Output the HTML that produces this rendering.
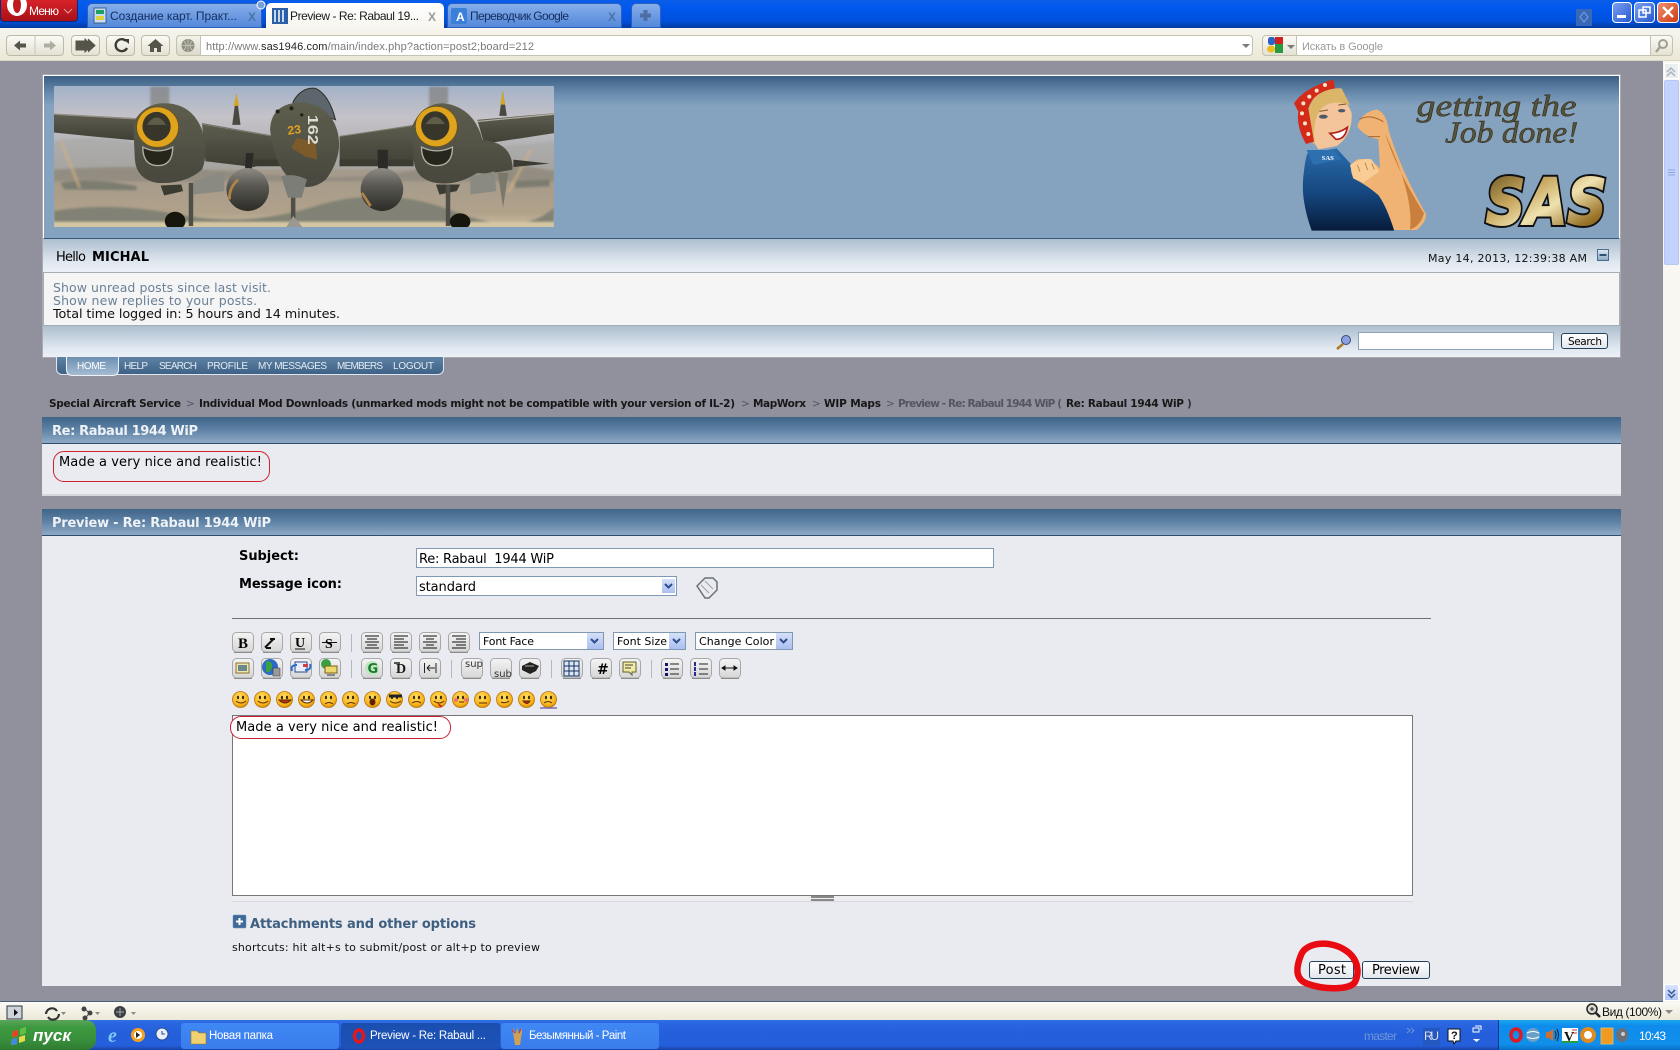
<!DOCTYPE html>
<html><head><meta charset="utf-8"><title>Preview - Re: Rabaul 1944 WiP</title>
<style>
html,body{margin:0;padding:0;width:1680px;height:1050px;overflow:hidden;background:#91919e}
.b{position:absolute;box-sizing:border-box}
svg{position:absolute;left:0;top:0}
text{white-space:pre}
.d{font-family:"DejaVu Sans",sans-serif}
.l{font-family:"Liberation Sans",sans-serif}
</style></head><body>
<!-- window chrome -->
<div class="b" style="left:0;top:0;width:1680px;height:28px;background:linear-gradient(#0a5de8,#0058ee 30%,#0050dc 75%,#003a9e)"></div>
<div class="b" style="left:0;top:28px;width:1680px;height:33px;background:linear-gradient(#f6f5ee,#ece9d8);border-bottom:1px solid #d8d5c4"></div>
<div class="b" style="left:0;top:0;width:78px;height:22px;background:linear-gradient(#d8222a,#a80f18);border:1px solid #0a2a7c;border-top:0;border-radius:0 0 4px 4px"></div>
<div class="b" style="left:87px;top:3px;width:175px;height:25px;background:linear-gradient(#86aeea,#5488da);border-radius:5px 5px 0 0;border:1px solid #2a5fc0"></div>
<div class="b" style="left:266px;top:3px;width:178px;height:26px;background:linear-gradient(#fff,#f6f5ee);border-radius:5px 5px 0 0"></div>
<div class="b" style="left:447px;top:3px;width:175px;height:25px;background:linear-gradient(#86aeea,#5488da);border-radius:5px 5px 0 0;border:1px solid #2a5fc0"></div>
<div class="b" style="left:631px;top:3px;width:30px;height:25px;background:linear-gradient(#86aeea,#5488da);border-radius:5px 5px 0 0;border:1px solid #2a5fc0"></div>
<div class="b" style="left:1576px;top:9px;width:16px;height:17px;background:#3a68b8"></div>
<div class="b" style="left:1612px;top:2px;width:20px;height:21px;background:linear-gradient(135deg,#7aa0f0,#2858d0);border:1px solid #fff;border-radius:4px"></div>
<div class="b" style="left:1634px;top:2px;width:21px;height:21px;background:linear-gradient(135deg,#7aa0f0,#2858d0);border:1px solid #fff;border-radius:4px"></div>
<div class="b" style="left:1657px;top:2px;width:22px;height:21px;background:linear-gradient(135deg,#ee9070,#d03a10);border:1px solid #fff;border-radius:4px"></div>
<!-- nav buttons -->
<div class="b" style="left:6px;top:35px;width:58px;height:21px;background:linear-gradient(#fbfaf5,#e4e2d4);border:1px solid #bdbaa8;border-radius:4px"></div>
<div class="b" style="left:71px;top:35px;width:29px;height:21px;background:linear-gradient(#fbfaf5,#e4e2d4);border:1px solid #bdbaa8;border-radius:4px"></div>
<div class="b" style="left:106px;top:35px;width:29px;height:21px;background:linear-gradient(#fbfaf5,#e4e2d4);border:1px solid #bdbaa8;border-radius:4px"></div>
<div class="b" style="left:141px;top:35px;width:29px;height:21px;background:linear-gradient(#fbfaf5,#e4e2d4);border:1px solid #bdbaa8;border-radius:4px"></div>
<div class="b" style="left:176px;top:35px;width:1077px;height:21px;background:#fff;border:1px solid #c4c1ae;border-radius:4px"></div>
<div class="b" style="left:176px;top:35px;width:25px;height:21px;background:linear-gradient(#f4f3ea,#dcdacb);border:1px solid #c4c1ae;border-radius:4px 0 0 4px"></div>
<div class="b" style="left:1262px;top:35px;width:411px;height:21px;background:#fff;border:1px solid #c4c1ae;border-radius:4px"></div>
<div class="b" style="left:1262px;top:35px;width:35px;height:21px;background:linear-gradient(#fbfaf5,#e4e2d4);border:1px solid #c4c1ae;border-radius:4px 0 0 4px"></div>
<div class="b" style="left:1650px;top:35px;width:23px;height:21px;background:linear-gradient(#fbfaf5,#e4e2d4);border:1px solid #c4c1ae;border-radius:0 4px 4px 0"></div>
<!-- scrollbar -->
<div class="b" style="left:1663px;top:61px;width:17px;height:941px;background:#f8f7f2"></div>
<div class="b" style="left:1664px;top:63px;width:15px;height:16px;background:#ecefef;border:1px solid #fff"></div>
<div class="b" style="left:1664px;top:80px;width:15px;height:185px;background:#c3d3fd;border:1px solid #b6c8f2;border-radius:2px"></div>
<div class="b" style="left:1664px;top:984px;width:15px;height:17px;background:linear-gradient(#d8e3fd,#b4c8f6);border:1px solid #fff"></div>
<!-- forum header -->
<div class="b" style="left:42px;top:74px;width:1579px;height:284px;background:#a9a9b0"></div>
<div class="b" style="left:43px;top:75px;width:1577px;height:164px;background:linear-gradient(#3b5f85 0,#6a8cae 18px,#85a3bf 30px,#85a3bf 100%);border:1px solid #fff;border-bottom:1px solid #35597c"></div>
<div class="b" style="left:43px;top:239px;width:1577px;height:33px;background:linear-gradient(#aebfcf,#dfe7ef 70%,#ecf1f6)"></div>
<div class="b" style="left:43px;top:272px;width:1577px;height:54px;background:#f5f5f5;border:1px solid #a6adb3"></div>
<div class="b" style="left:43px;top:326px;width:1577px;height:31px;background:linear-gradient(#aebfcf,#dfe7ef 70%,#ecf1f6)"></div>
<div class="b" style="left:1358px;top:332px;width:196px;height:18px;background:#fff;border:1px solid #8ca3b8"></div>
<div class="b" style="left:1561px;top:333px;width:47px;height:16px;background:linear-gradient(#fff,#e2e7ec);border:1px solid #23405c;border-radius:3px"></div>
<div class="b" style="left:1597px;top:249px;width:12px;height:12px;background:linear-gradient(#dfe8f2,#8ea8c4);border:1px solid #4a6c90"></div>
<!-- menu -->
<div class="b" style="left:56px;top:357px;width:388px;height:18px;background:linear-gradient(#5f82a4,#3e6287);border:1px solid #dfe7ef;border-top:0;border-radius:0 0 6px 6px"></div>
<div class="b" style="left:66px;top:357px;width:53px;height:19px;background:linear-gradient(#6d90b2,#a4bcd2);border:1px solid #eef2f6;border-top:0;border-radius:0 0 6px 6px"></div>
<!-- post preview -->
<div class="b" style="left:42px;top:417px;width:1579px;height:27px;background:linear-gradient(#3f6487,#5f83a6 50%,#8faac5);border-bottom:1px solid #2e4e6c"></div>
<div class="b" style="left:42px;top:444px;width:1579px;height:52px;background:#e9ebf1;border-bottom:2px solid #d6d6dc"></div>
<div class="b" style="left:53px;top:451px;width:217px;height:31px;border:1px solid #d02030;border-radius:11px"></div>
<!-- form -->
<div class="b" style="left:42px;top:509px;width:1579px;height:27px;background:linear-gradient(#3f6487,#5f83a6 50%,#8faac5);border-bottom:1px solid #2e4e6c"></div>
<div class="b" style="left:42px;top:536px;width:1579px;height:450px;background:#e9ebf1"></div>
<div class="b" style="left:416px;top:548px;width:578px;height:20px;background:#fff;border:1px solid #7f99b2"></div>
<div class="b" style="left:416px;top:576px;width:261px;height:20px;background:#fff;border:1px solid #7f99b2"></div>
<div class="b" style="left:661px;top:578px;width:15px;height:16px;background:linear-gradient(#d5e0f8,#aabff0);border:1px solid #fff"></div>
<div class="b" style="left:232px;top:618px;width:1199px;height:1px;background:#6c7178"></div>
<div class="b" style="left:479px;top:632px;width:125px;height:18px;background:#fff;border:1px solid #7f99b2"></div>
<div class="b" style="left:587px;top:633px;width:16px;height:16px;background:linear-gradient(#d5e0f8,#aabff0)"></div>
<div class="b" style="left:613px;top:632px;width:73px;height:18px;background:#fff;border:1px solid #7f99b2"></div>
<div class="b" style="left:669px;top:633px;width:16px;height:16px;background:linear-gradient(#d5e0f8,#aabff0)"></div>
<div class="b" style="left:695px;top:632px;width:98px;height:18px;background:#fff;border:1px solid #7f99b2"></div>
<div class="b" style="left:776px;top:633px;width:16px;height:16px;background:linear-gradient(#d5e0f8,#aabff0)"></div>
<div class="b" style="left:232px;top:715px;width:1181px;height:181px;background:#fff;border:1px solid #777"></div>
<div class="b" style="left:230px;top:716px;width:221px;height:23px;background:#fff;border:1px solid #c8202e;border-radius:11px"></div>
<div class="b" style="left:232px;top:896px;width:1181px;height:6px;background:#eeeef0;border-bottom:1px solid #d8d8de"></div>
<div class="b" style="left:811px;top:896px;width:23px;height:2px;background:#888"></div>
<div class="b" style="left:811px;top:899px;width:23px;height:2px;background:#888"></div>
<div class="b" style="left:1309px;top:961px;width:45px;height:18px;background:linear-gradient(#fff,#e2e7ec);border:1px solid #23405c;border-radius:3px"></div>
<div class="b" style="left:1362px;top:961px;width:68px;height:18px;background:linear-gradient(#fff,#e2e7ec);border:1px solid #23405c;border-radius:3px"></div>
<!-- status + taskbar -->
<div class="b" style="left:0;top:1001px;width:1663px;height:1px;background:#4a6078"></div>
<div class="b" style="left:0;top:1002px;width:1680px;height:18px;background:linear-gradient(#fbfaf4,#ece9d8)"></div>
<div class="b" style="left:0;top:1020px;width:1680px;height:30px;background:linear-gradient(#2f6fe6,#2a66e0 12%,#245edb 50%,#2560dc 85%,#1941a5)"></div>
<div class="b" style="left:0;top:1020px;width:96px;height:30px;background:linear-gradient(#5aa55a,#3c9a3e 25%,#388e3c 70%,#2f7a30);border-radius:0 10px 10px 0"></div>
<div class="b" style="left:181px;top:1023px;width:158px;height:26px;background:linear-gradient(#3f88f4,#3a7cec);border-radius:3px"></div>
<div class="b" style="left:341px;top:1023px;width:159px;height:26px;background:linear-gradient(#1a4fb0,#1e52b7);border-radius:3px"></div>
<div class="b" style="left:501px;top:1023px;width:158px;height:26px;background:linear-gradient(#3f88f4,#3a7cec);border-radius:3px"></div>
<div class="b" style="left:1498px;top:1020px;width:182px;height:30px;background:linear-gradient(#18a8ee,#0f8bec 20%,#1090ea 80%,#0a70c8);border-left:1px solid #0a3a90"></div>

<svg width="1680" height="1050" viewBox="0 0 1680 1050" xmlns="http://www.w3.org/2000/svg">
<defs>
<linearGradient id="sky" x1="0" y1="0" x2="0" y2="1"><stop offset="0" stop-color="#a3b2c8"/><stop offset=".22" stop-color="#c5c2c8"/><stop offset=".45" stop-color="#b1b1b2"/><stop offset=".6" stop-color="#a49a8c"/><stop offset=".9" stop-color="#b0a18a"/><stop offset="1" stop-color="#cdbf9f"/></linearGradient>
<linearGradient id="tank" x1="0" y1="0" x2="0" y2="1"><stop offset="0" stop-color="#8e8c84"/><stop offset=".4" stop-color="#5a5953"/><stop offset="1" stop-color="#2c2b27"/></linearGradient>
<linearGradient id="body" x1="0" y1="0" x2="0" y2="1"><stop offset="0" stop-color="#5e5e4e"/><stop offset="1" stop-color="#48473e"/></linearGradient>
<linearGradient id="wing" x1="0" y1="0" x2="0" y2="1"><stop offset="0" stop-color="#5d5d50"/><stop offset="1" stop-color="#3f3f35"/></linearGradient>
<linearGradient id="gold" x1="0" y1="0" x2="1" y2="1"><stop offset="0" stop-color="#5a4516"/><stop offset=".35" stop-color="#c8a860"/><stop offset=".55" stop-color="#efe2b0"/><stop offset=".8" stop-color="#9a7428"/><stop offset="1" stop-color="#5a4516"/></linearGradient>
<linearGradient id="dress" x1="0" y1="0" x2="0" y2="1"><stop offset="0" stop-color="#2a6cac"/><stop offset=".55" stop-color="#15467e"/><stop offset="1" stop-color="#071c3a"/></linearGradient>
<radialGradient id="sm" cx=".45" cy=".35" r=".7"><stop offset="0" stop-color="#ffe06a"/><stop offset=".7" stop-color="#f8b418"/><stop offset="1" stop-color="#c77c08"/></radialGradient>
<linearGradient id="btn" x1="0" y1="0" x2="0" y2="1"><stop offset="0" stop-color="#f4f4f4"/><stop offset="1" stop-color="#d6d6d6"/></linearGradient>
<filter id="soft"><feGaussianBlur stdDeviation="3"/></filter>
<filter id="s2"><feGaussianBlur stdDeviation="1"/></filter>
<symbol id="tb" viewBox="0 0 22 21" width="22" height="21"><rect x=".5" y=".5" width="21" height="19.5" rx="4" fill="url(#btn)" stroke="#a8a8a8"/><path d="M2 20.5H20" stroke="#8c8c8c"/></symbol>
<symbol id="sf" viewBox="0 0 17 17" width="17" height="17"><circle cx="8.5" cy="8.5" r="8" fill="url(#sm)" stroke="#b87408" stroke-width=".8"/><ellipse cx="6" cy="6.5" rx="1.1" ry="1.7" fill="#3a2a08"/><ellipse cx="11" cy="6.5" rx="1.1" ry="1.7" fill="#3a2a08"/></symbol>
</defs>

<!-- Plane banner -->
<svg x="54" y="86" width="500" height="141" viewBox="40 48 1453 425" preserveAspectRatio="none">
<rect x="40" y="48" width="1453" height="425" fill="url(#sky)"/>
<g filter="url(#soft)">
<path d="M40 215Q200 190 300 230T600 240T1000 230T1493 215V300H40Z" fill="#a8a8a6" opacity=".7"/>
<path d="M40 300Q300 280 600 310T1100 300T1493 305V335H40Z" fill="#8e8a7e" opacity=".8"/>
<path d="M60 340Q160 325 280 350L280 362L70 360ZM1380 335L1480 330V350L1380 355Z" fill="#7c7c70"/>
<path d="M40 425Q200 395 400 435T800 410T1200 425T1493 415V458H40Z" fill="#818274"/>
<rect x="40" y="458" width="1453" height="15" fill="#d6c8a4"/>
<rect x="320" y="50" width="55" height="60" fill="#7b7670" opacity=".6"/><rect x="1130" y="50" width="55" height="60" fill="#7b7670" opacity=".6"/>
<path d="M60 215L115 355" stroke="#d0b080" stroke-width="9" opacity=".6"/>
<path d="M1425 240L1360 370" stroke="#d0b080" stroke-width="9" opacity=".6"/>
</g>
<g filter="url(#s2)">
<path d="M558 165L570 70L582 165Z" fill="#4a4a40"/><path d="M562 108L570 70L578 108Z" fill="#d6a428"/>
<path d="M1334 138L1344 62L1356 138Z" fill="#4a4a40"/><path d="M1337 104L1344 62L1351 104Z" fill="#d6a428"/>
<path d="M40 132L280 145L280 212L150 200L40 188Z" fill="url(#wing)"/><path d="M40 133L280 147" stroke="#8f8e80" stroke-width="4"/>
<path d="M1270 150L1493 130V190L1400 205L1290 222Z" fill="url(#wing)"/><path d="M1270 155L1493 133" stroke="#b0afa0" stroke-width="4"/>
<path d="M470 160L690 200L690 270L620 292L480 275Z" fill="url(#wing)"/><path d="M470 163L680 200" stroke="#807f72" stroke-width="3"/>
<path d="M870 200L1085 165L1085 272L870 290Z" fill="url(#wing)"/><path d="M870 200L1085 167" stroke="#807f72" stroke-width="3"/>
<path d="M620 270H700V290H620ZM870 270H1085V290H870ZM1375 270L1480 282L1375 292Z" fill="#3a3a31"/>
<path d="M598 250L620 250L615 300H595ZM980 240H1010V300H982Z" fill="#2a2a25"/>
<path d="M270 160Q300 100 360 100Q440 100 470 180Q490 250 470 300Q420 345 340 340Q280 330 275 270Z" fill="url(#body)"/>
<path d="M1080 170Q1110 100 1170 100Q1260 110 1285 210Q1375 220 1372 300Q1300 315 1270 310Q1210 350 1150 340Q1090 330 1085 270Z" fill="url(#body)"/>
<circle cx="341" cy="172" r="61" fill="#e0a41c"/><circle cx="341" cy="172" r="61" fill="none" stroke="#6a5018" stroke-width="2"/><ellipse cx="338" cy="170" rx="41" ry="44" fill="#37352a"/><path d="M310 165Q338 120 366 165" fill="#5e5c4a"/>
<circle cx="1151" cy="170" r="61" fill="#e0a41c"/><circle cx="1151" cy="170" r="61" fill="none" stroke="#6a5018" stroke-width="2"/><ellipse cx="1148" cy="168" rx="41" ry="44" fill="#37352a"/><path d="M1120 163Q1148 118 1176 163" fill="#5e5c4a"/>
<path d="M298 232Q342 255 385 232Q385 288 342 288Q298 288 298 232Z" fill="#27261f" stroke="#b0b0a4" stroke-width="4"/>
<path d="M1108 232Q1152 255 1198 232Q1198 288 1152 288Q1108 288 1108 232Z" fill="#27261f" stroke="#b0b0a4" stroke-width="4"/>
<path d="M735 95Q760 50 800 55Q840 75 858 150L735 100Z" fill="#5b666c" stroke="#2e2e28" stroke-width="3"/>
<path d="M668 180Q670 100 760 97Q845 105 865 190Q880 260 830 330Q790 365 745 345Q680 300 668 180Z" fill="url(#body)"/>
<circle cx="690" cy="125" r="6" fill="#22221c"/><circle cx="730" cy="115" r="6" fill="#22221c"/><circle cx="760" cy="135" r="5" fill="#22221c"/>
<path d="M745 205L800 215L805 270L770 260L730 235Z" fill="#7b5a2a"/>
<text x="720" y="195" font-family="Liberation Sans,sans-serif" font-size="36" font-weight="700" fill="#e0a020" transform="rotate(-8 720 195)">23</text>
<text font-family="Liberation Sans,sans-serif" font-size="44" font-weight="700" fill="#dcdcd0" textLength="90" lengthAdjust="spacingAndGlyphs" transform="translate(778 135) rotate(90)">162</text>
<ellipse cx="603" cy="360" rx="62" ry="65" fill="url(#tank)"/><path d="M575 330Q548 355 550 390" stroke="#b0844a" stroke-width="8" fill="none"/>
<ellipse cx="993" cy="360" rx="62" ry="65" fill="url(#tank)"/><path d="M935 370L960 410" stroke="#b0844a" stroke-width="8" fill="none"/>
<path d="M1250 325L1320 305L1325 365L1250 375Z" fill="#8a8a82"/>
<path d="M445 335L535 305L535 365L445 375Z" fill="#8a8a82"/>
<path d="M350 348L410 345L415 365L360 378Z" fill="#3a3a32"/>
<path d="M1150 345H1220L1210 365L1160 375Z" fill="#3a3a32"/>
<path d="M1330 310H1360L1345 415Z" fill="#7a7868"/>
<path d="M438 340V470M1185 345V470M735 320V470" stroke="#4f4f47" stroke-width="13"/>
<path d="M700 320Q740 310 775 330L760 385H720Z" fill="#7d7d78"/>
<path d="M715 473L735 440L762 473Z" fill="#9a9890"/>
<ellipse cx="392" cy="455" rx="30" ry="28" fill="#17160f"/>
<ellipse cx="1220" cy="457" rx="30" ry="25" fill="#17160f"/>
</g>
</svg>

<!-- Rosie + logo -->
<g transform="translate(1270 70) scale(.33333)">
<path d="M100 320Q105 270 112 250L200 235L245 285L335 315L375 430L385 475L370 482H125Q92 390 100 320Z" fill="url(#dress)"/>
<path d="M110 240L190 240L215 268L130 285Z" fill="#2c70b0"/>
<path d="M135 72Q222 58 245 130Q248 195 200 228L145 238Q112 190 115 125Z" fill="#f4c49a"/>
<path d="M112 125Q135 52 215 55L240 105Q180 85 150 120Q125 160 135 225L112 200Z" fill="#dcb668"/>
<path d="M180 190Q212 188 232 172Q226 208 198 208Z" fill="#fff" stroke="#b02018" stroke-width="5"/>
<ellipse cx="160" cy="140" rx="13" ry="6" fill="#4a5a68"/><ellipse cx="215" cy="122" rx="11" ry="5" fill="#4a5a68"/>
<path d="M148 124l26-4M205 105l24-3" stroke="#7a5a30" stroke-width="3"/>
<path d="M72 100Q100 55 190 28L195 55Q130 65 115 115L132 215L108 222Q78 170 85 125Z" fill="#d42a1a"/>
<g fill="#fbe6c8"><circle cx="100" cy="100" r="6"/><circle cx="96" cy="130" r="6"/><circle cx="105" cy="160" r="6"/><circle cx="118" cy="80" r="6"/><circle cx="140" cy="62" r="6"/><circle cx="165" cy="45" r="6"/><circle cx="115" cy="192" r="6"/></g>
<path d="M262 170Q272 128 320 118Q350 128 356 182Q392 300 468 432Q470 455 440 480L372 480Q350 410 325 375Q290 345 250 325Q232 285 262 268Q300 262 330 295L325 208Q285 200 262 170Z" fill="#f0b374"/>
<path d="M345 190Q380 300 462 430Q450 470 420 478Q432 375 345 190Z" fill="#c8803c"/>
<path d="M268 148Q300 130 340 155M295 200l35 0" stroke="#a8682c" stroke-width="3" fill="none"/>
<path d="M240 285Q270 262 305 268L328 305L280 338L250 325Z" fill="#f8cc94"/>
<path d="M262 285l8 20M285 278l8 22M305 280l8 18" stroke="#b87a3a" stroke-width="2.500"/>
<text x="155" y="270" font-family="Liberation Serif,serif" font-size="20" font-weight="700" fill="#fff">SAS</text>
<text x="440" y="138" font-family="Liberation Serif,serif" font-size="92" font-style="italic" textLength="480" lengthAdjust="spacingAndGlyphs" fill="#57533a" stroke="#2e2a1a" stroke-width="1.600">getting the</text>
<text x="525" y="218" font-family="Liberation Serif,serif" font-size="92" font-style="italic" textLength="400" lengthAdjust="spacingAndGlyphs" fill="#57533a" stroke="#2e2a1a" stroke-width="1.600">Job done!</text>
<g font-family="DejaVu Sans,sans-serif" font-size="190" font-weight="700" font-style="italic">
<text x="648" y="462" textLength="362" lengthAdjust="spacingAndGlyphs" fill="#111" stroke="#111" stroke-width="18">SAS</text>
<text x="648" y="462" textLength="362" lengthAdjust="spacingAndGlyphs" fill="url(#gold)" stroke="url(#gold)" stroke-width="6">SAS</text>
</g>
</g>

<!-- Chrome glyphs -->
<ellipse cx="17" cy="5" rx="10" ry="11" fill="#fff"/><ellipse cx="17" cy="5" rx="4" ry="8" fill="#c01820"/>
<g class="l" font-size="12">
<text x="29" y="15" fill="#fff" font-size="12" textLength="30">Меню</text>
<path d="M64 9l4 4 4-4" stroke="#e8a0a0" fill="none"/>
<rect x="94" y="8" width="12" height="15" fill="#c8dcf4" stroke="#3a6088"/><rect x="96" y="10" width="8" height="4" fill="#20a060"/><rect x="96" y="16" width="8" height="4" fill="#e0d040"/>
<text x="110" y="20" fill="#163060" textLength="127">Создание карт. Практ...</text>
<text x="248" y="21" fill="#4873a8" font-weight="700" font-size="12">X</text>
<rect x="272" y="8" width="16" height="16" fill="#2a60a8"/><path d="M275 10v12M279 10v12M283 10v12" stroke="#fff" stroke-width="1.500"/>
<text x="290" y="20" fill="#1a1a1a" textLength="129">Preview - Re: Rabaul 19...</text>
<text x="428" y="21" fill="#9a9a9a" font-weight="700" font-size="12">X</text>
<circle cx="261" cy="5" r="4" fill="#7aa0d8" stroke="#fff"/>
<rect x="451" y="8" width="16" height="16" rx="2" fill="#3a80d8"/><text x="456" y="21" fill="#fff" font-size="12" font-weight="700">A</text>
<text x="470" y="20" fill="#163060" textLength="99">Переводчик Google</text>
<text x="608" y="21" fill="#4873a8" font-weight="700" font-size="12">X</text>
<path d="M640 15.500h11M645.500 10v11" stroke="#4d6fa4" stroke-width="4"/>
<path d="M1580 17l4-5 4 5-4 5z" fill="none" stroke="#7ea2dc"/>
<rect x="1617" y="15" width="9" height="3" fill="#fff"/>
<rect x="1639" y="10" width="7" height="7" fill="none" stroke="#fff" stroke-width="1.500"/><rect x="1643" y="7" width="7" height="6" fill="none" stroke="#fff" stroke-width="1.500"/>
<path d="M1663 7l10 10M1673 7l-10 10" stroke="#fff" stroke-width="2.400"/>
<!-- nav icons -->
<path d="M14 45.500l6-5v3h6v4h-6v3z" fill="#55554a"/>
<path d="M56 45.500l-6-5v3h-6v4h6v3z" fill="#b0aea0"/>
<path d="M35 36v20" stroke="#c8c6b8"/>
<path d="M76 41h9v-2l7 6.500-7 6.500v-2h-9zM88 39l7 6.500-7 6.500" fill="#55554a" stroke="#55554a"/>
<path d="M126 41a6 6 0 1 0 1 7" fill="none" stroke="#3c3c34" stroke-width="2.400"/><path d="M123 39h6v5z" fill="#3c3c34"/>
<path d="M155.500 39l-8 7h2.500v6h4v-4h3v4h4v-6h2.500z" fill="#55554a"/>
<circle cx="188" cy="45.500" r="6.500" fill="#8d8d80"/><path d="M182 45.500h12M188 39v13M184 41q4 4.500 0 9M192 41q-4 4.500 0 9" stroke="#c8c8be" fill="none" stroke-width=".8"/>
<text x="206" y="50" font-size="11" fill="#7a7a7a" textLength="328"><tspan>http://www.</tspan><tspan fill="#222">sas1946.com</tspan><tspan>/main/index.php?action=post2;board=212</tspan></text>
<path d="M1242 44h8l-4 4z" fill="#7a7a7a"/>
<rect x="1268" y="37" width="7" height="8" rx="2.500" fill="#2a62c8"/><rect x="1275" y="37" width="8" height="7" fill="#d02020"/><rect x="1275" y="44" width="8" height="9" fill="#2a9a40"/><ellipse cx="1271" cy="49" rx="4" ry="3.500" fill="#eebb20"/>
<path d="M1287 45h8l-4 4z" fill="#7a7a7a"/>
<text x="1302" y="50" font-size="11" fill="#9a9a9a" textLength="81">Искать в Google</text>
<circle cx="1663" cy="44" r="4" fill="none" stroke="#a0a090" stroke-width="2"/><path d="M1660 47l-4 5" stroke="#a0a090" stroke-width="2.400"/>
<path d="M1667 72l4-4 4 4M1667 76l4-4 4 4" fill="none" stroke="#a9b4be" stroke-width="1.500"/>
<path d="M1668 170h7M1668 172.500h7M1668 175h7" stroke="#8ea6e0"/>
<path d="M1668 990l3.500 3.500 3.500-3.500M1668 994l3.500 3.500 3.500-3.500" fill="none" stroke="#3c5a98" stroke-width="1.500"/>
</g>

<!-- Forum text -->
<g class="d" font-size="13" fill="#000">
<text x="56" y="261" textLength="30">Hello</text>
<text x="92" y="261" font-weight="700" textLength="57">MICHAL</text>
<text x="1428" y="262" font-size="11" textLength="159" fill="#111">May 14, 2013, 12:39:38 AM</text>
<path d="M1599.500 255h7" stroke="#2c5278" stroke-width="2"/>
<text x="53" y="292" fill="#6b8197" font-size="12.500" textLength="218">Show unread posts since last visit.</text>
<text x="53" y="305" fill="#6b8197" font-size="12.500" textLength="204">Show new replies to your posts.</text>
<text x="53" y="318" fill="#111" font-size="12.800" textLength="287">Total time logged in: 5 hours and 14 minutes.</text>
<circle cx="1346" cy="340" r="4.500" fill="#8aa0e0" stroke="#3c4a70"/><path d="M1343 344l-6 5" stroke="#b07a20" stroke-width="2.500"/>
<text x="1568" y="345" font-size="10.500" textLength="34">Search</text>
<g class="l" font-size="10" fill="#e4ecf3">
<text x="77" y="369" textLength="29" fill="#fff">HOME</text>
<text x="124" y="369" textLength="24">HELP</text>
<text x="159" y="369" textLength="38">SEARCH</text>
<text x="207" y="369" textLength="41">PROFILE</text>
<text x="258" y="369" textLength="69">MY MESSAGES</text>
<text x="337" y="369" textLength="46">MEMBERS</text>
<text x="393" y="369" textLength="41">LOGOUT</text>
</g>
<g font-size="10.500" font-weight="700" fill="#171717">
<text x="49" y="407" textLength="132">Special Aircraft Service</text>
<text x="186" y="407" fill="#555560" font-weight="400">&gt;</text>
<text x="199" y="407" textLength="536">Individual Mod Downloads (unmarked mods might not be compatible with your version of IL-2)</text>
<text x="741" y="407" fill="#555560" font-weight="400">&gt;</text>
<text x="753" y="407" textLength="53">MapWorx</text>
<text x="812" y="407" fill="#555560" font-weight="400">&gt;</text>
<text x="824" y="407" textLength="57">WIP Maps</text>
<text x="886" y="407" fill="#555560" font-weight="400">&gt;</text>
<text x="898" y="407" textLength="164" fill="#555560">Preview - Re: Rabaul 1944 WiP (</text>
<text x="1066" y="407" textLength="118">Re: Rabaul 1944 WiP</text>
<text x="1187" y="407" fill="#333">)</text>
</g>
<text x="52" y="435" fill="#eef2f6" font-weight="700" textLength="146">Re: Rabaul 1944 WiP</text>
<text x="59" y="466" textLength="203">Made a very nice and realistic!</text>
<text x="52" y="527" fill="#eef2f6" font-weight="700" textLength="219">Preview - Re: Rabaul 1944 WiP</text>
<text x="239" y="560" font-weight="700" textLength="60">Subject:</text>
<text x="239" y="588" font-weight="700" textLength="103">Message icon:</text>
<text x="419" y="563" textLength="135">Re: Rabaul  1944 WiP</text>
<text x="419" y="591" textLength="57">standard</text>
<path d="M665 584l3.500 3.500 3.500-3.500" fill="none" stroke="#2c4c8c" stroke-width="2"/>
<path d="M697 586l8-8h8l4 4v8l-8 8h-4z" fill="none" stroke="#6a7078" stroke-width="1.500"/><path d="M701 585l8 8M705 581l8 8" stroke="#9aa0a8"/>
<g font-size="11">
<text x="483" y="645" textLength="51">Font Face</text>
<text x="617" y="645" textLength="50">Font Size</text>
<text x="699" y="645" textLength="75">Change Color</text>
</g>
<path d="M591 639l3.500 3.500 3.500-3.500M673 639l3.500 3.500 3.500-3.500M780 639l3.500 3.500 3.500-3.500" fill="none" stroke="#2c4c8c" stroke-width="2"/>

<!-- editor toolbar -->
<use href="#tb" x="232" y="632"/><use href="#tb" x="261" y="632"/><use href="#tb" x="290" y="632"/><use href="#tb" x="319" y="632"/>
<use href="#tb" x="361" y="632"/><use href="#tb" x="390" y="632"/><use href="#tb" x="419" y="632"/><use href="#tb" x="448" y="632"/>
<text x="238" y="648" font-family="Liberation Serif,serif" font-weight="700" font-size="15">B</text>
<path d="M265 647.500l9-9M266 648h5M270 639h5" stroke="#111" stroke-width="2"/>
<text x="295" y="647" font-family="Liberation Serif,serif" font-weight="700" font-size="14">U</text><path d="M295 649h10" stroke="#111"/>
<text x="325" y="648" font-family="Liberation Serif,serif" font-weight="700" font-size="14">S</text><path d="M322 642.500h15" stroke="#111"/>
<path d="M351.500 634v18M551.500 660v18M651.500 660v18M451.500 660v18M351.500 660v18" stroke="#b8b8c0"/>
<path d="M365 636h14M367 639h10M365 642h14M367 645h10M365 648h14" stroke="#111"/>
<path d="M394 636h14M394 639h10M394 642h14M394 645h10M394 648h14" stroke="#111"/>
<path d="M423 636h14M426 639h8M423 642h14M426 645h8M423 648h14" stroke="#111"/>
<path d="M452 636h14M456 639h10M452 642h14M456 645h10M452 648h14" stroke="#111"/>
<use href="#tb" x="232" y="658"/><use href="#tb" x="261" y="658"/><use href="#tb" x="290" y="658"/><use href="#tb" x="319" y="658"/>
<use href="#tb" x="361" y="658"/><use href="#tb" x="390" y="658"/><use href="#tb" x="419" y="658"/>
<use href="#tb" x="461" y="658"/><use href="#tb" x="490" y="658"/><use href="#tb" x="519" y="658"/>
<use href="#tb" x="561" y="658"/><use href="#tb" x="590" y="658"/><use href="#tb" x="619" y="658"/>
<use href="#tb" x="661" y="658"/><use href="#tb" x="690" y="658"/><use href="#tb" x="719" y="658"/>
<rect x="236" y="663" width="13" height="10" fill="#f0e4b0" stroke="#907030"/><rect x="238" y="665" width="9" height="6" fill="#6a8a8a"/>
<circle cx="270" cy="667" r="8" fill="#2a6ac8"/><path d="M266 661q7 0 6 6t-6 5z" fill="#3aa040"/><rect x="273" y="668" width="7" height="8" fill="#9a9a9a" stroke="#333" stroke-width=".5"/>
<rect x="295" y="662" width="12" height="10" fill="#e8eefc" stroke="#2a4a90"/><path d="M292 671q-2-6 5-6M310 664q2 6-5 6" fill="none" stroke="#2a6ac8" stroke-width="2"/><rect x="303" y="664" width="5" height="3" fill="#d04040"/>
<circle cx="326" cy="664" r="5" fill="#3aa040"/><rect x="325" y="666" width="12" height="7" fill="#ecd870" stroke="#806010"/><path d="M327 675h8" stroke="#333"/>
<circle cx="372" cy="668" r="7" fill="#bfe6bf"/><text x="367.500" y="673" font-size="13" font-weight="700" fill="#1a7a30">G</text>
<text x="396" y="673" font-family="Liberation Serif,serif" font-size="14" font-weight="700" fill="#1a1a1a">D</text><path d="M394 663h6" stroke="#555" stroke-width="2"/>
<path d="M424.500 663v10M436 663v10M427 668h8M427 668l3-3M427 668l3 3" fill="none" stroke="#222"/>
<text x="465" y="667" font-size="10" fill="#333">sup</text>
<text x="494" y="677" font-size="10" fill="#333">sub</text>
<path d="M522 666l8-4 9 4-3 5-6 3-8-4z" fill="#222"/><path d="M525 666h9" stroke="#aaa"/>
<rect x="564" y="661" width="15" height="15" fill="#dce6f4"/><path d="M564 661h15v15h-15zM569 661v15M574 661v15M564 666h15M564 671h15" fill="none" stroke="#13335f"/>
<text x="597" y="674" font-size="14" font-weight="700">#</text>
<path d="M623 662h13v10h-4v3l-3-3h-6z" fill="#f2eaa0" stroke="#606030"/><path d="M625 665h8M625 668h6" stroke="#444"/>
<path d="M665 663h3v3h-3zM665 668h3v3h-3zM665 673h3v3h-3z" fill="#141470"/><path d="M670 664h9M670 669h9M670 674h9" stroke="#222"/>
<path d="M694 662h2v4h-2zM694 667h2v4h-2zM694 672h2v4h-2z" fill="#2a2a90"/><path d="M699 664h9M699 669h9M699 674h9" stroke="#222"/>
<path d="M722 668h15M722 668l3-2v4zM737 668l-3-2v4z" fill="#111" stroke="#111"/>

<!-- smileys -->
<use href="#sf" x="232" y="691"/><use href="#sf" x="254" y="691"/><use href="#sf" x="276" y="691"/><use href="#sf" x="298" y="691"/><use href="#sf" x="320" y="691"/><use href="#sf" x="342" y="691"/><use href="#sf" x="364" y="691"/><use href="#sf" x="386" y="691"/><use href="#sf" x="408" y="691"/><use href="#sf" x="430" y="691"/><use href="#sf" x="452" y="691"/><use href="#sf" x="474" y="691"/><use href="#sf" x="496" y="691"/><use href="#sf" x="518" y="691"/><use href="#sf" x="540" y="691"/>
<g fill="none" stroke="#5a2a04" stroke-width="1">
<path d="M236 701q5 4 10 0"/><path d="M258 701q5 4 10 0"/>
<path d="M279 700q6 6 12 0z" fill="#c03010"/><path d="M301 700q6 6 12 0z" fill="#fff"/>
<path d="M325 704q4-3 8 0"/><path d="M347 704q4-3 8 0"/>
<ellipse cx="372.500" cy="702" rx="2.500" ry="3" fill="#6a1a04"/>
<path d="M389 696h13" stroke-width="3" stroke="#222"/><path d="M390 701q5 4 11 0"/>
<path d="M412 703q5-3 9 0"/>
<path d="M434 701q5 4 10 0"/><path d="M438 703q2 5 4 3" fill="#d02020" stroke="#d02020"/>
<circle cx="456" cy="700" r="2" fill="#f07070" stroke="none"/><circle cx="466" cy="700" r="2" fill="#f07070" stroke="none"/><path d="M459 702h5"/>
<path d="M479 703h8"/><path d="M501 702q4 2 8-1"/>
<path d="M523 701q4 5 7 0z" fill="#d02020"/>
<path d="M544 703q4-3 8 0"/><path d="M540 708h17" stroke="#7a6ab0" stroke-width="1.500"/>
</g>

<text x="236" y="731" textLength="202">Made a very nice and realistic!</text>
<rect x="233" y="915" width="13" height="13" rx="1" fill="#3f6a98" stroke="#6a90b8" stroke-width=".5"/><path d="M236 921.500h7M239.500 918v7" stroke="#fff" stroke-width="2"/>
<text x="250" y="928" font-weight="700" textLength="226" fill="#3f5f80">Attachments and other options</text>
<text x="232" y="951" font-size="11" textLength="308" fill="#111">shortcuts: hit alt+s to submit/post or alt+p to preview</text>
<text x="1318" y="974" textLength="28">Post</text>
<text x="1372" y="974" textLength="48">Preview</text>
<path d="M1345 950C1330 940 1306 942 1301 955C1295 970 1296 980 1308 984C1325 990 1350 990 1355 982C1360 972 1358 958 1345 950Z" fill="none" stroke="#e80c12" stroke-width="6.500" stroke-linejoin="round"/>
</g>

<!-- status bar -->
<g class="l" font-size="11">
<rect x="7" y="1006" width="15" height="13" fill="#cfd4dc" stroke="#2a3440"/><path d="M14 1009l4 3.500-4 3.500z" fill="#111"/>
<path d="M46 1014a6 6 0 0 1 11-3M59 1014a6 6 0 0 1-11 3" fill="none" stroke="#333" stroke-width="2.200"/><path d="M61 1012h5l-2.500 3zM95 1012h5l-2.500 3zM131 1012h5l-2.500 3z" fill="#8a8a8a"/>
<circle cx="84" cy="1009" r="2.500" fill="#444"/><circle cx="90" cy="1013" r="2.500" fill="#444"/><circle cx="85" cy="1018" r="2.500" fill="#444"/><path d="M84 1009l6 4-5 5" stroke="#444" fill="none"/>
<circle cx="120" cy="1012" r="6" fill="#3c4044"/><path d="M116 1012h8M120 1008v8" stroke="#aaa"/>
<circle cx="1592" cy="1009" r="5" fill="#d8d8d0" stroke="#222" stroke-width="1.500"/><path d="M1590 1009h4M1592 1007v4" stroke="#222"/><path d="M1596 1013l4 4" stroke="#222" stroke-width="2.400"/>
<text x="1602" y="1016" font-size="12" fill="#111" textLength="60">Вид (100%)</text>
<path d="M1665 1010h8l-4 4z" fill="#8a8a8a"/>
</g>

<!-- taskbar -->
<g class="l" fill="#fff">
<path d="M13 1031l5-1v6l-6 1zM20 1029l6-2v6l-6 2zM12 1039l5-1v6l-6 1zM19 1037l6-2v6l-6 2z" fill="#e8d84c"/><path d="M13 1031l5-1v6l-6 1z" fill="#e84020"/><path d="M20 1029l6-2v6l-6 2z" fill="#60c040"/><path d="M12 1039l5-1v6l-6 1z" fill="#4088e8"/>
<text x="33" y="1041" font-size="17" font-weight="700" font-style="italic" textLength="38">пуск</text>
<text x="108" y="1042" font-family="Liberation Serif,serif" font-size="20" font-style="italic" font-weight="700" fill="#7ac8f4">e</text>
<circle cx="138" cy="1035" r="7" fill="#f4a020"/><circle cx="138" cy="1035" r="4" fill="#fff"/><path d="M136 1032l4 3-4 3z" fill="#222"/>
<circle cx="162" cy="1034" r="6" fill="#e8f0fc" stroke="#2a4a90"/><path d="M162 1031v3h3" stroke="#2a4a90" fill="none"/>
<path d="M191 1031h6l2 2h7v11h-15z" fill="#f0d070" stroke="#a07a20" stroke-width=".6"/>
<text x="209" y="1039" font-size="11.500" textLength="64">Новая папка</text>
<ellipse cx="359" cy="1036" rx="4.500" ry="6" fill="none" stroke="#e01820" stroke-width="3.500"/>
<text x="370" y="1039" font-size="11.500" textLength="116">Preview - Re: Rabaul ...</text>
<path d="M513 1028l3 6 1-7 2 7 3-6v4l-2 13h-5l-2-13z" fill="#d0a050"/><path d="M512 1030l3 3M521 1029l-2 4" stroke="#d03030"/>
<text x="529" y="1039" font-size="11.500" textLength="97">Безымянный - Paint</text>
<text x="1364" y="1040" font-size="12" fill="#6f94d9" textLength="33">master</text>
<path d="M1407 1028l3 2.500-3 2.500M1411 1028l3 2.500-3 2.500" fill="none" stroke="#6f94d9"/>
<rect x="1423" y="1028" width="17" height="18" fill="#2258c0"/>
<text x="1424" y="1040" font-size="12" textLength="15" fill="#dde">RU</text>
<path d="M1448 1029h12v12h-4l-2 3-1-3h-5z" fill="#fff" stroke="#111"/><text x="1451" y="1039" font-size="11" font-weight="700" fill="#111">?</text>
<path d="M1473 1028h6v4h-6zM1475 1026h6v4" fill="none" stroke="#fff"/><path d="M1473 1039h7l-3.500 3z" fill="#fff"/>
<ellipse cx="1516" cy="1035" rx="5" ry="6" fill="none" stroke="#e01820" stroke-width="3.500"/>
<ellipse cx="1533" cy="1035" rx="7" ry="7" fill="#6aa0c8"/><path d="M1527 1033q6-3 12 0M1527 1037q6 3 12 0" stroke="#fff" fill="none"/>
<path d="M1546 1032h3l4-3v12l-4-3h-3z" fill="#d07030"/><path d="M1555 1031q2 4 0 8M1557 1029q3 6 0 12" stroke="#222" fill="none"/>
<rect x="1562" y="1028" width="16" height="15" fill="#fff"/><text x="1564" y="1041" font-family="Liberation Serif,serif" font-size="14" font-weight="700" fill="#111">V</text><path d="M1572 1030h5M1572 1033h5" stroke="#c03030"/><path d="M1562 1042h16" stroke="#20a040" stroke-width="2"/>
<circle cx="1588" cy="1035" r="8" fill="#e08a20"/><circle cx="1588" cy="1035" r="4" fill="#fff"/>
<rect x="1601" y="1028" width="12" height="16" fill="#f09a20" stroke="#e8c070" stroke-width=".8"/>
<ellipse cx="1622" cy="1035" rx="6" ry="7" fill="#6a7078"/><circle cx="1623" cy="1034" r="2" fill="#ccc"/>
<text x="1639" y="1040" font-size="12" textLength="27">10:43</text>
</g>
</svg>
</body></html>
